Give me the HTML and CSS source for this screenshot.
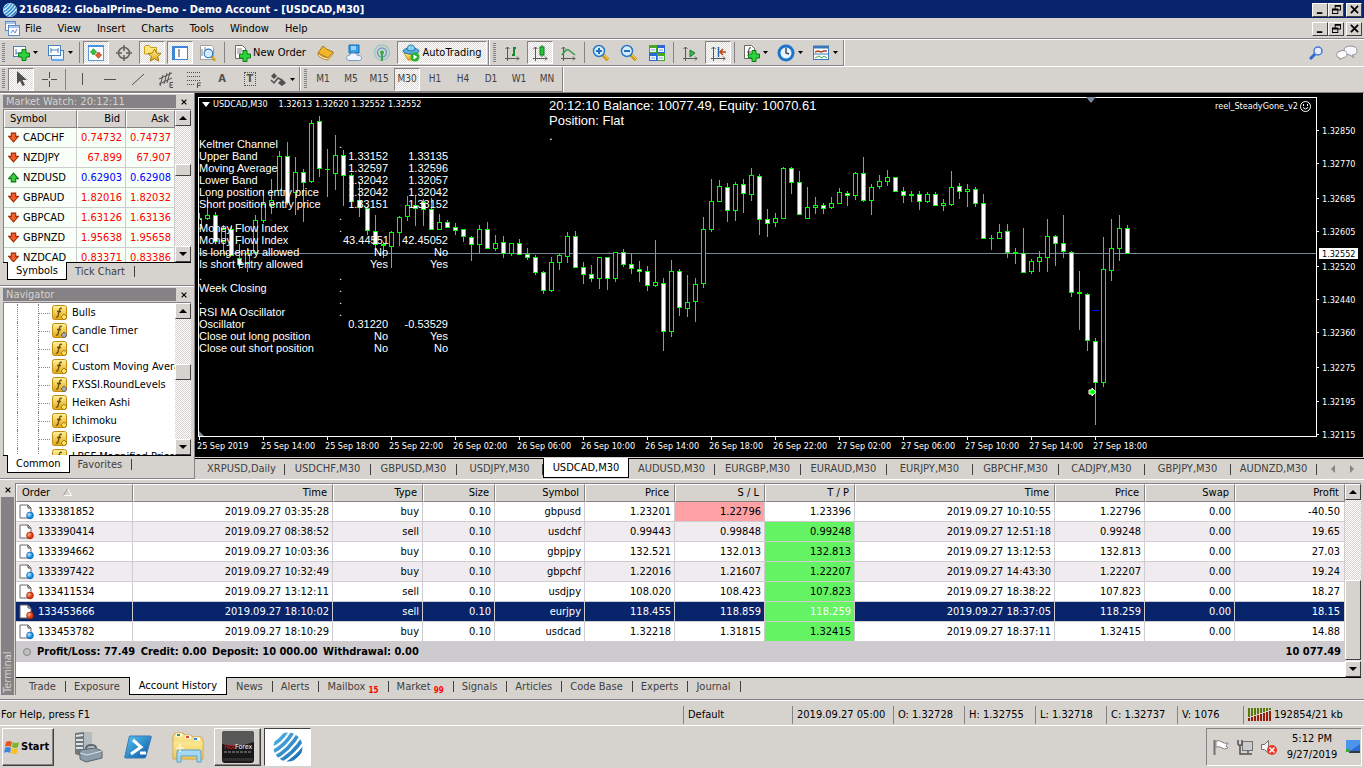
FILE: index.html
```
<!DOCTYPE html>
<html lang="en">

<head>
  <meta charset="UTF-8">
  <meta name="viewport" content="width=device-width, initial-scale=1.0">
  <title>2160842: GlobalPrime-Demo - Demo Account - [USDCAD,M30]</title>

  <link rel="stylesheet" href="styles.css">
</head>

<body>
  <!-- shared icon shapes -->
  <svg class="defs" width="0" height="0" aria-hidden="true">
    <defs>
      <linearGradient id="gold" x1="0" y1="0" x2="0" y2="1"><stop offset="0" stop-color="#fff3a0"/><stop offset="1" stop-color="#e0a410"/></linearGradient>
      <linearGradient id="globeBlue" x1="0" y1="0" x2="1" y2="1"><stop offset="0" stop-color="#5cc4f4"/><stop offset="1" stop-color="#0654a0"/></linearGradient>
      <radialGradient id="ballBlue" cx="35%" cy="35%"><stop offset="0" stop-color="#c8ecff"/><stop offset="1" stop-color="#0a86de"/></radialGradient>
      <radialGradient id="ballRed" cx="35%" cy="35%"><stop offset="0" stop-color="#ffb090"/><stop offset="1" stop-color="#d83408"/></radialGradient>
      <clipPath id="globeClip"><circle cx="15" cy="15" r="14.5"/></clipPath>
      <symbol id="globe" viewBox="0 0 30 30">
        <g clip-path="url(#globeClip)" fill="none" stroke="url(#globeBlue)" stroke-width="3.6">
          <path d="M-4 14Q8 10 15-3M-3 21Q12 15 21-2M-1 27Q15 20 27 0M3 31Q20 23 31 5M9 34Q23 27 34 12M16 36Q27 30 36 19"/>
        </g>
      </symbol>
      <symbol id="min" viewBox="0 0 10 10"><path d="M1 8h6v2H1z"/></symbol>
      <symbol id="restore" viewBox="0 0 10 10"><path d="M3 0h7v6H7v4H0V4h3zM4 2v2h3v1h2V2zM1 6v3h5V6z" fill-rule="evenodd"/></symbol>
      <symbol id="close" viewBox="0 0 10 10"><path d="M1 1l8 8M9 1L1 9" stroke="#000" stroke-width="2"/></symbol>
      <symbol id="up" viewBox="0 0 8 8"><path d="M4 2L8 6H0z"/></symbol>
      <symbol id="down" viewBox="0 0 8 8"><path d="M4 6L0 2h8z"/></symbol>
      <symbol id="drop" viewBox="0 0 5 3"><path d="M0 0h5L2.500 3z"/></symbol>
      <symbol id="arrDown" viewBox="0 0 10 10"><path d="M3 1h4v3h2.500L5 9 .5 4H3z" fill="#f26030" stroke="#a02c08"/></symbol>
      <symbol id="arrUp" viewBox="0 0 10 10"><path d="M3 9h4V6h2.500L5 1 .5 6H3z" fill="#40c840" stroke="#107818"/></symbol>
      <symbol id="plus" viewBox="0 0 12 12"><path d="M4 .5h4V4h3.500v4H8v3.500H4V8H.5V4H4z" fill="#2cd43c" stroke="#0a7c14"/></symbol>
      <symbol id="lens" viewBox="0 0 18 18"><path d="M11 11l5 5" stroke="#c89814" stroke-width="3.500"/><path d="M12 11l4.500 4.500" stroke="#ffe060"/><circle cx="7" cy="7" r="5.500" fill="#d4ecfc" stroke="#2c78c4" stroke-width="1.500"/></symbol>
      <symbol id="axes" viewBox="0 0 18 18"><path d="M4.500 3v14M2 14.500h14M2.500 5l2-2 2 2M14 12.500l2 2-2 2" fill="none" stroke="#585858"/></symbol>
      <symbol id="fx" viewBox="0 0 16 16">
        <rect x=".5" y=".5" width="14" height="14" rx="2" fill="url(#gold)" stroke="#c08c10"/>
        <path d="M10 3.500q-2-1-2.500 1.500L6 11q-.5 1.500-2 1M5 6.500h4" fill="none" stroke="#6c4c00" stroke-width="1.300"/>
      </symbol>
      <symbol id="docBuy" viewBox="0 0 16 16"><path d="M1 1h8l3 3v10H1z" fill="#fff" stroke="#686868"/><path d="M9 1v3h3" fill="none" stroke="#404040"/><circle cx="11" cy="11.500" r="3.400" fill="url(#ballBlue)" stroke="#0868b0" stroke-width=".7"/></symbol>
      <symbol id="docSell" viewBox="0 0 16 16"><path d="M1 1h8l3 3v10H1z" fill="#fff" stroke="#686868"/><path d="M9 1v3h3" fill="none" stroke="#404040"/><circle cx="11" cy="11.500" r="3.400" fill="url(#ballRed)" stroke="#a82404" stroke-width=".7"/></symbol>
    </defs>
  </svg>

  <header class="titlebar">
    <svg class="ico14"><circle cx="7" cy="7" r="7" fill="#d8f0ff"/><use href="#globe" width="14" height="14"/></svg>
    <h1>2160842: GlobalPrime-Demo - Demo Account - [USDCAD,M30]</h1>
    <div class="winbtns">
      <button aria-label="Minimize"><svg><use href="#min"/></svg></button>
      <button aria-label="Restore"><svg><use href="#restore"/></svg></button>
      <button class="x" aria-label="Close"><svg><use href="#close"/></svg></button>
    </div>
  </header>

  <nav class="menubar">
    <svg width="16" height="16" fill="#fff" stroke="#5c8cd0"><rect x="1.500" y=".5" width="10" height="9"/><path d="M2 2h9"/><rect x="4.500" y="4.500" width="11" height="10"/><path d="M5 6h10M7 12l2-3 2 3 2-4" fill="none"/></svg>
    <button>File</button>
    <button>View</button>
    <button>Insert</button>
    <button>Charts</button>
    <button>Tools</button>
    <button>Window</button>
    <button>Help</button>
    <div class="winbtns">
      <button aria-label="Minimize chart"><svg><use href="#min"/></svg></button>
      <button aria-label="Restore chart"><svg><use href="#restore"/></svg></button>
      <button class="x" aria-label="Close chart"><svg><use href="#close"/></svg></button>
    </div>
  </nav>

  <div class="toolrow">
    <div class="toolbar">
      <i class="grip"></i>
      <button class="tb wide" aria-label="New chart">
        <svg class="ico18"><rect x="1.500" y="2.500" width="12" height="10" fill="#fff" stroke="#4880b8"/><path d="M4 5v6M4 9h8" stroke="#4880b8"/><use href="#plus" x="6" y="5" width="12" height="12"/></svg>
        <svg class="drop"><use href="#drop"/></svg>
      </button>
      <button class="tb wide" aria-label="Profiles">
        <svg class="ico18"><rect x="4.500" y="6.500" width="12" height="9" fill="#e8f4ff" stroke="#4880c0"/><rect x="1.500" y="1.500" width="12" height="10" fill="#fff" stroke="#4880c0"/><path d="M4 4v5M11 4v5M4 6h7" stroke="#4880c0"/><path d="M5 16h12" stroke="#68a8e8" stroke-width="2"/></svg>
        <svg class="drop"><use href="#drop"/></svg>
      </button>
      <i class="sep"></i>
      <button class="tb on" aria-label="Market Watch"><svg class="ico18"><rect x="1.500" y="1.500" width="15" height="15" fill="#fff" stroke="#5c9cdc"/><path d="M1 2h16" stroke="#4890e0" stroke-width="2"/><use href="#arrUp" x="3" y="4" width="7" height="7"/><use href="#arrDown" x="8" y="8" width="7" height="7"/></svg></button>
      <button class="tb" aria-label="Data Window"><svg class="ico18"><circle cx="9" cy="9" r="5.500" fill="none" stroke="#606060" stroke-width="1.500"/><path d="M9 1v6M9 11v6M1 9h6M11 9h6" stroke="#606060" stroke-width="1.500"/></svg></button>
      <button class="tb on" aria-label="Navigator"><svg class="ico18"><path d="M1.500 10V2.500l1-1h4l1 2h6V10z" fill="#ffe878" stroke="#c8a020"/><path d="M11.500 5l2 4 4.500.5-3.300 3 1 4.500-4.200-2.300L7.300 17l1-4.500L5 9.500 9.500 9z" fill="url(#gold)" stroke="#a87800"/></svg></button>
      <button class="tb on" aria-label="Terminal"><svg class="ico18"><rect x="1.500" y="2.500" width="15" height="13" fill="#fff" stroke="#3c84d4"/><path d="M3 3v12M1 3h16" stroke="#3c84d4" stroke-width="2"/><path d="M7 6h2M7 8h2M7 10h2M7 12h2" stroke="#404040"/></svg></button>
      <button class="tb" aria-label="Strategy Tester"><svg class="ico18"><path d="M1.500 1.500h11l2 2v12h-13z" fill="#fff" stroke="#a0a0a0"/><path d="M3 5v7M6 3v7" stroke="#808080"/><use href="#lens" x="4" y="4" width="14" height="14"/></svg></button>
      <i class="sep"></i>
      <button class="tb labeled order"><svg class="ico18"><path d="M2.500 1.500h7l3 3v10h-10z" fill="#fff" stroke="#686868"/><path d="M4 5h5M4 7h6M4 9h4" stroke="#808080"/><use href="#plus" x="6" y="6" width="12" height="12"/></svg><span>New Order</span></button>
      <button class="tb" aria-label="MetaEditor"><svg class="ico18"><path d="M1 9l5-7q2 3 10 6l-5 6z" fill="#f0b828" stroke="#a87410"/><path d="M1 9q3 4 10 5l5-6v2l-5 6Q3 15 1 11z" fill="#fff0b0" stroke="#a87410" stroke-width=".8"/></svg></button>
      <button class="tb" aria-label="MQL5 community"><svg class="ico18"><path d="M4 1h10v8H4z" fill="#38a0e8" stroke="#1468b0"/><path d="M6 3h5M6 5h5" stroke="#fff"/><path d="M4 16.500q-3-.5-2.500-3T5 11q1-2.500 4-2t3.500 2.500q3-.5 4 1.500t-2 3.500z" fill="#f0f6ff" stroke="#7c9cc8"/></svg></button>
      <button class="tb" aria-label="Signals"><svg class="ico18" fill="none" stroke-width="1.500"><circle cx="9" cy="8.500" r="7.500" stroke="#a0c8c0"/><circle cx="9" cy="8.500" r="4.500" stroke="#68a0c8"/><circle cx="9" cy="8.500" r="2" fill="#38a848"/><path d="M9 9v8" stroke="#38a848" stroke-width="2"/></svg></button>
      <button class="tb on labeled auto"><svg class="ico18"><path d="M2 9q7 3 14 0l-2 7H6z" fill="url(#gold)" stroke="#c89818"/><ellipse cx="9" cy="7" rx="8" ry="3" fill="#58b0e0" stroke="#2878b0"/><path d="M5 6q0-5 4-5t4 5q-4 2-8 0z" fill="#88d0f4" stroke="#2878b0"/><circle cx="13" cy="13" r="4.500" fill="#28b038"/><path d="M11.500 10.500l4 2.500-4 2.500z" fill="#fff"/></svg><span>AutoTrading</span></button>
    </div>
    <div class="toolbar">
      <i class="grip"></i>
      <button class="tb" aria-label="Bar Chart"><svg class="ico18"><use href="#axes" width="18" height="18"/><path d="M11 3v9M9 11h2M11 4h2" stroke="#188828" stroke-width="2"/></svg></button>
      <button class="tb on" aria-label="Candlesticks"><svg class="ico18"><use href="#axes" width="18" height="18"/><path d="M11 1v12" stroke="#187820"/><rect x="9" y="3" width="4" height="8" fill="#20c838" stroke="#107818"/></svg></button>
      <button class="tb" aria-label="Line Chart"><svg class="ico18"><use href="#axes" width="18" height="18"/><path d="M3 11q5-8 8-4l5 4" fill="none" stroke="#389848" stroke-width="1.500"/></svg></button>
      <i class="sep"></i>
      <button class="tb" aria-label="Zoom In"><svg class="ico18"><use href="#lens" width="18" height="18"/><path d="M4 7h6M7 4v6" stroke="#2070c0" stroke-width="2"/></svg></button>
      <button class="tb" aria-label="Zoom Out"><svg class="ico18"><use href="#lens" width="18" height="18"/><path d="M4 7h6" stroke="#2070c0" stroke-width="2"/></svg></button>
      <button class="tb" aria-label="Tile Windows"><svg class="ico18"><path d="M1 1h8v8H1z" fill="#48a828"/><path d="M9 1h8v8H9z" fill="#2868d8"/><path d="M1 9h8v8H1z" fill="#2868d8"/><path d="M9 9h8v8H9z" fill="#48a828"/><path d="M2 4h6v4H2zM10 4h6v4h-6zM2 12h6v4H2zM10 12h6v4h-6z" fill="#eef4ff"/><path d="M3 6h4M11 6h4M3 14h4M11 14h4" stroke="#80a8d0"/></svg></button>
      <i class="sep"></i>
      <button class="tb" aria-label="Auto Scroll"><svg class="ico18"><use href="#axes" width="18" height="18"/><path d="M9 6l5 3-5 4z" fill="#38b848" stroke="#188028"/></svg></button>
      <button class="tb on" aria-label="Chart Shift"><svg class="ico18"><use href="#axes" width="18" height="18"/><path d="M9.500 3v10" stroke="#2868b0" stroke-width="1.500"/><path d="M17 8h-6M14 5l-3 3 3 3" fill="none" stroke="#c04010" stroke-width="1.500"/></svg></button>
      <i class="sep"></i>
      <button class="tb wide" aria-label="Indicators"><svg class="ico18"><path d="M2.500 1.500h7l3 3v10h-10z" fill="#fff" stroke="#686868"/><path d="M9 4q-2-1-2 1l-1 7M5 8h4" fill="none" stroke="#404040"/><use href="#plus" x="6" y="6" width="12" height="12"/></svg><svg class="drop"><use href="#drop"/></svg></button>
      <button class="tb wide" aria-label="Periods"><svg class="ico18"><circle cx="9" cy="9" r="7" fill="#e8f6ff" stroke="#1c74cc" stroke-width="3"/><path d="M9 4v5l3 1" fill="none" stroke="#404858" stroke-width="1.500"/></svg><svg class="drop"><use href="#drop"/></svg></button>
      <button class="tb wide" aria-label="Templates"><svg class="ico18"><rect x="1.500" y="2.500" width="15" height="13" fill="#fff" stroke="#3878b8"/><path d="M1 3h16" stroke="#3878b8" stroke-width="3"/><path d="M3 8l3-1 3 1 3-1h3" fill="none" stroke="#b04020" stroke-width="1.500"/><path d="M2 10h14" stroke="#3878b8"/><path d="M3 14l4-2 3 2 2-2 3 2" fill="none" stroke="#38a040"/></svg><svg class="drop"><use href="#drop"/></svg></button>
    </div>
    <div class="tray-tools">
      <svg width="14" height="14"><path d="M1 13l5-5" stroke="#3068c8" stroke-width="3"/><circle cx="9" cy="5" r="4" fill="#e8eef8" stroke="#4878d8" stroke-width="1.500"/></svg>
      <svg width="22" height="16"><path d="M14 1q7 0 7 4.500T16 10l2 3-4-3q-6-.5-6-4.500T14 1z" fill="#f8f8fc" stroke="#909098"/><path d="M6 5.500q5 0 5 3.500t-5 4l-2 2v-2q-3.500-.5-3.500-3.500T6 5.500z" fill="#fff" stroke="#909098"/></svg>
    </div>
  </div>

  <div class="toolrow second">
    <div class="toolbar">
      <i class="grip"></i>
      <button class="tb on" aria-label="Cursor"><svg class="ico18"><path d="M5 1v13l3-3 2.500 5 2.500-1-2.500-5H15z" fill="#505050"/></svg></button>
      <button class="tb" aria-label="Crosshair"><svg class="ico18 line"><path d="M9.500 2v6M9.500 11v6M2 9.500h6M11 9.500h6"/></svg></button>
      <i class="sep"></i>
      <button class="tb" aria-label="Vertical Line"><svg class="ico18 line"><path d="M9.500 3v12"/></svg></button>
      <button class="tb" aria-label="Horizontal Line"><svg class="ico18 line"><path d="M3 9.500h12"/></svg></button>
      <button class="tb" aria-label="Trendline"><svg class="ico18 line"><path d="M3 15L15 4"/></svg></button>
      <button class="tb" aria-label="Equidistant Channel"><svg class="ico18 line"><path d="M2 9L15 3M2 14l13-6M6 5L3 16M10 3L7 14M13 2l-3 11"/><path d="M16 12.500h-3v5h3M13 15h2.500"/></svg></button>
      <button class="tb" aria-label="Fibonacci"><svg class="ico18 line"><path d="M2 2.500h14M2 6.500h14M2 10.500h14M2 14.500h8" stroke-dasharray="1 1"/><path d="M16 13h-3.500v5M13 15.500h2.500"/></svg></button>
      <button class="tb glyph" aria-label="Text">A</button>
      <button class="tb glyph boxed" aria-label="Text Label"><span>T</span></button>
      <button class="tb wide" aria-label="Arrows"><svg class="ico18"><path d="M5 3l3 3-3 3-3-3zM13 9l4 4-4 3-4-3z" fill="#505050"/><path d="M2 10l3 3 4-5 4 2" fill="none" stroke="#505050" stroke-width="1.500"/></svg><svg class="drop"><use href="#drop"/></svg></button>
    </div>
    <div class="toolbar frames">
      <i class="grip"></i>
      <button class="tb">M1</button>
      <button class="tb">M5</button>
      <button class="tb">M15</button>
      <button class="tb on">M30</button>
      <button class="tb">H1</button>
      <button class="tb">H4</button>
      <button class="tb">D1</button>
      <button class="tb">W1</button>
      <button class="tb">MN</button>
    </div>
  </div>

  <main class="workspace">
    <aside class="side">
      <section class="panel">
        <div class="panel-title"><h2>Market Watch: 20:12:11</h2><button aria-label="Close Market Watch"><svg><use href="#close"/></svg></button></div>
        <div class="panel-box">
          <div class="clip">
            <table class="quotes">
              <thead><tr><th>Symbol</th><th>Bid</th><th>Ask</th></tr></thead>
              <tbody>
                <tr><td><svg><use href="#arrDown"/></svg>CADCHF</td><td>0.74732</td><td>0.74737</td></tr>
                <tr><td><svg><use href="#arrDown"/></svg>NZDJPY</td><td>67.899</td><td>67.907</td></tr>
                <tr class="rise"><td><svg><use href="#arrUp"/></svg>NZDUSD</td><td>0.62903</td><td>0.62908</td></tr>
                <tr><td><svg><use href="#arrDown"/></svg>GBPAUD</td><td>1.82016</td><td>1.82032</td></tr>
                <tr><td><svg><use href="#arrDown"/></svg>GBPCAD</td><td>1.63126</td><td>1.63136</td></tr>
                <tr><td><svg><use href="#arrDown"/></svg>GBPNZD</td><td>1.95638</td><td>1.95658</td></tr>
                <tr><td><svg><use href="#arrDown"/></svg>NZDCAD</td><td>0.83371</td><td>0.83386</td></tr>
              </tbody>
            </table>
          </div>
          <div class="scroll watch-scroll">
            <button aria-label="Scroll up"><svg><use href="#up"/></svg></button>
            <i class="thumb"></i>
            <button aria-label="Scroll down"><svg><use href="#down"/></svg></button>
          </div>
        </div>
        <div class="tabs"><button class="active">Symbols</button><button>Tick Chart</button></div>
      </section>

      <section class="panel">
        <div class="panel-title"><h2>Navigator</h2><button aria-label="Close Navigator"><svg><use href="#close"/></svg></button></div>
        <div class="panel-box">
          <div class="clip">
            <ul class="tree">
              <li><svg><use href="#fx"/><path class="mark" d="M12 9l3 3-3 3-3-3z"/></svg>Bulls</li>
              <li><svg><use href="#fx"/><path class="mark gray" d="M12 9l3 3-3 3-3-3z"/></svg>Candle Timer</li>
              <li><svg><use href="#fx"/><path class="mark" d="M12 9l3 3-3 3-3-3z"/></svg>CCI</li>
              <li><svg><use href="#fx"/><path class="mark" d="M12 9l3 3-3 3-3-3z"/></svg>Custom Moving Average</li>
              <li><svg><use href="#fx"/><path class="mark gray" d="M12 9l3 3-3 3-3-3z"/></svg>FXSSI.RoundLevels</li>
              <li><svg><use href="#fx"/><path class="mark" d="M12 9l3 3-3 3-3-3z"/></svg>Heiken Ashi</li>
              <li><svg><use href="#fx"/><path class="mark" d="M12 9l3 3-3 3-3-3z"/></svg>Ichimoku</li>
              <li><svg><use href="#fx"/><path class="mark" d="M12 9l3 3-3 3-3-3z"/></svg>iExposure</li>
              <li><svg><use href="#fx"/></svg>LBSF Magnified Price</li>
            </ul>
          </div>
          <div class="scroll nav-scroll">
            <button aria-label="Scroll up"><svg><use href="#up"/></svg></button>
            <i class="thumb"></i>
            <button aria-label="Scroll down"><svg><use href="#down"/></svg></button>
          </div>
        </div>
        <div class="tabs"><button class="active">Common</button><button>Favorites</button></div>
      </section>
    </aside>

    <section class="chart-area">
      <div class="chart">
        <svg id="chart"></svg>
        <p class="quote-line"><svg width="8" height="5" fill="#fff"><path d="M0 0h8L4 5z"/></svg><span class="pair">USDCAD,M30</span><span>1.32613</span><span>1.32620</span><span>1.32552</span><span>1.32552</span></p>
        <p class="balance">20:12:10 Balance: 10077.49, Equity: 10070.61<br>Position: Flat<br>.</p>
        <p class="expert">reel_SteadyGone_v2
          <svg width="11" height="11" fill="none" stroke="#fff"><circle cx="5.500" cy="5.500" r="5"/><path d="M3 6.500q2.500 3 5 0M3.500 3v2M7.500 3v2"/></svg>
        </p>
        <div class="readout">
          <span>Keltner Channel</span><span>.</span><span></span><span></span>
          <span>Upper Band</span><span></span><span>1.33152</span><span>1.33135</span>
          <span>Moving Average</span><span></span><span>1.32597</span><span>1.32596</span>
          <span>Lower Band</span><span></span><span>1.32042</span><span>1.32057</span>
          <span>Long position entry price</span><span></span><span>1.32042</span><span>1.32042</span>
          <span>Short position entry price</span><span></span><span>1.33151</span><span>1.33152</span>
          <span>.</span><span>.</span><span></span><span></span>
          <span>Money Flow Index</span><span>.</span><span></span><span></span>
          <span>Money Flow Index</span><span></span><span>43.44551</span><span>42.45052</span>
          <span>Is long entry allowed</span><span></span><span>No</span><span>No</span>
          <span>Is short entry allowed</span><span></span><span>Yes</span><span>Yes</span>
          <span>.</span><span>.</span><span></span><span></span>
          <span>Week Closing</span><span>.</span><span></span><span></span>
          <span>.</span><span>.</span><span></span><span></span>
          <span>RSI MA Oscillator</span><span>.</span><span></span><span></span>
          <span>Oscillator</span><span></span><span>0.31220</span><span>-0.53529</span>
          <span>Close out long position</span><span></span><span>No</span><span>Yes</span>
          <span>Close out short position</span><span></span><span>No</span><span>No</span>
        </div>
      </div>
      <div class="tabs chart-tabs">
        <button>XRPUSD,Daily</button>
        <button>USDCHF,M30</button>
        <button>GBPUSD,M30</button>
        <button>USDJPY,M30</button>
        <button class="active">USDCAD,M30</button>
        <button>AUDUSD,M30</button>
        <button>EURGBP,M30</button>
        <button>EURAUD,M30</button>
        <button>EURJPY,M30</button>
        <button>GBPCHF,M30</button>
        <button>CADJPY,M30</button>
        <button>GBPJPY,M30</button>
        <button>AUDNZD,M30</button>
        <span class="tab-scroll"><svg width="4" height="8"><path d="M4 0v8L0 4z"/></svg><svg width="4" height="8"><path d="M0 0v8l4-4z"/></svg></span>
      </div>
    </section>
  </main>

  <section class="terminal">
    <div class="strip">
      <button aria-label="Close Terminal"><svg><use href="#close"/></svg></button>
      <h2>Terminal</h2>
    </div>
    <div class="terminal-main">
      <div class="history">
        <div class="clip">
          <table class="orders">
            <colgroup>
              <col class="c-order"><col class="c-time"><col class="c-mid"><col class="c-size"><col class="c-mid"><col class="c-mid"><col class="c-mid"><col class="c-mid"><col class="c-time"><col class="c-mid"><col class="c-mid"><col>
            </colgroup>
            <thead>
              <tr><th>Order <svg width="9" height="8"><path d="M4.500.5l4 7h-8z" fill="none" stroke="#fff"/><path d="M4.500.5l-4 7" stroke="#909090"/></svg></th><th>Time</th><th>Type</th><th>Size</th><th>Symbol</th><th>Price</th><th>S / L</th><th>T / P</th><th>Time</th><th>Price</th><th>Swap</th><th>Profit</th></tr>
            </thead>
            <tbody>
              <tr><td><svg><use href="#docBuy"/></svg>133381852</td><td>2019.09.27 03:35:28</td><td>buy</td><td>0.10</td><td>gbpusd</td><td>1.23201</td><td class="stop">1.22796</td><td>1.23396</td><td>2019.09.27 10:10:55</td><td>1.22796</td><td>0.00</td><td>-40.50</td></tr>
              <tr><td><svg><use href="#docSell"/></svg>133390414</td><td>2019.09.27 08:38:52</td><td>sell</td><td>0.10</td><td>usdchf</td><td>0.99443</td><td>0.99848</td><td class="take">0.99248</td><td>2019.09.27 12:51:18</td><td>0.99248</td><td>0.00</td><td>19.65</td></tr>
              <tr><td><svg><use href="#docBuy"/></svg>133394662</td><td>2019.09.27 10:03:36</td><td>buy</td><td>0.10</td><td>gbpjpy</td><td>132.521</td><td>132.013</td><td class="take">132.813</td><td>2019.09.27 13:12:53</td><td>132.813</td><td>0.00</td><td>27.03</td></tr>
              <tr><td><svg><use href="#docBuy"/></svg>133397422</td><td>2019.09.27 10:32:49</td><td>buy</td><td>0.10</td><td>gbpchf</td><td>1.22016</td><td>1.21607</td><td class="take">1.22207</td><td>2019.09.27 14:43:30</td><td>1.22207</td><td>0.00</td><td>19.24</td></tr>
              <tr><td><svg><use href="#docSell"/></svg>133411534</td><td>2019.09.27 13:12:11</td><td>sell</td><td>0.10</td><td>usdjpy</td><td>108.020</td><td>108.423</td><td class="take">107.823</td><td>2019.09.27 18:38:22</td><td>107.823</td><td>0.00</td><td>18.27</td></tr>
              <tr class="selected"><td><svg><use href="#docSell"/></svg>133453666</td><td>2019.09.27 18:10:02</td><td>sell</td><td>0.10</td><td>eurjpy</td><td>118.455</td><td>118.859</td><td class="take">118.259</td><td>2019.09.27 18:37:05</td><td>118.259</td><td>0.00</td><td>18.15</td></tr>
              <tr><td><svg><use href="#docBuy"/></svg>133453782</td><td>2019.09.27 18:10:29</td><td>buy</td><td>0.10</td><td>usdcad</td><td>1.32218</td><td>1.31815</td><td class="take">1.32415</td><td>2019.09.27 18:37:11</td><td>1.32415</td><td>0.00</td><td>14.88</td></tr>
            </tbody>
            <tfoot>
              <tr><td colspan="11"><i class="bullet"></i><span>Profit/Loss: 77.49</span> <span>Credit: 0.00</span> <span>Deposit: 10 000.00</span> <span>Withdrawal: 0.00</span></td><td>10 077.49</td></tr>
            </tfoot>
          </table>
        </div>
        <div class="scroll history-scroll">
          <button aria-label="Scroll up"><svg><use href="#up"/></svg></button>
          <i class="thumb"></i>
          <button aria-label="Scroll down"><svg><use href="#down"/></svg></button>
        </div>
      </div>
      <div class="tabs terminal-tabs">
        <button>Trade</button>
        <button>Exposure</button>
        <button class="active">Account History</button>
        <button>News</button>
        <button>Alerts</button>
        <button>Mailbox <sub>15</sub></button>
        <button>Market <sub>99</sub></button>
        <button>Signals</button>
        <button>Articles</button>
        <button>Code Base</button>
        <button>Experts</button>
        <button>Journal</button>
      </div>
    </div>
  </section>

  <div class="status">
    <span class="help">For Help, press F1</span>
    <span class="s-profile">Default</span>
    <span class="s-time">2019.09.27 05:00</span>
    <span class="s-val">O: 1.32728</span>
    <span class="s-val">H: 1.32755</span>
    <span class="s-val">L: 1.32718</span>
    <span class="s-val">C: 1.32737</span>
    <span class="s-vol">V: 1076</span>
    <span class="s-net">
      <svg width="24" height="13" stroke-width="2"><path d="M1 0v9M4 0v8M7 0v7M10 0v6M13 0v5M16 0v4M19 0v3M22 0v2" stroke="#587808"/><path d="M1 10v3M4 9v4M7 8v5M10 7v6M13 6v7M16 5v8M19 4v9M22 3v10" stroke="#981c08"/></svg>
      192854/21 kb
    </span>
  </div>

  <footer class="taskbar">
    <button class="start"><svg width="16" height="16"><path d="M2 3q3-2 6 0L7 8Q4 6 1 8z" fill="#e85820"/><path d="M9 3q3 2 6 0l-1 5q-3 2-6 0z" fill="#78b828"/><path d="M1 9q3-2 6 0l-1 5Q3 12 0 14z" fill="#3c84e0"/><path d="M8 9q3 2 6 0l-1 5q-3 2-6 0z" fill="#f8c020"/></svg>Start</button>
    <button class="task" aria-label="Server Manager"><svg width="30" height="32"><path d="M2 2l9-1v25l-9-3z" fill="#70787c"/><path d="M11 1h8v25h-8z" fill="#b4bcc0"/><path d="M3 5l7-1M3 9h7M3 13h7M3 17h7" stroke="#dce4e8" stroke-width="2"/><path d="M7 19l15-2 7 3v7l-16 4-6-3z" fill="#8c9ca8" stroke="#58646c"/><path d="M7 22l7 2 15-4" fill="none" stroke="#d8e4ec"/><path d="M13 18q0-4 5-4t5 3" fill="none" stroke="#606870" stroke-width="2"/></svg></button>
    <button class="task" aria-label="PowerShell"><svg width="30" height="32"><path d="M7 5h20q2 0 1 2l-5 18q0 2-2 2H3q-2 0-1-2L6 7q0-2 1-2z" fill="url(#globeBlue)" stroke="#3878b8"/><path d="M10 9l8 7-10 7M17 22h6" fill="none" stroke="#fff" stroke-width="3"/></svg></button>
    <button class="task" aria-label="Explorer"><svg width="34" height="32"><path d="M2 5l2-3h8l2 2h6l2 2h8l2 3v19H2z" fill="#f8e088" stroke="#d0a848"/><path d="M5 4h6M14 6h6M23 8h6" stroke="#fff" stroke-width="3"/><path d="M6 4h3" stroke="#28a838" stroke-width="2"/><path d="M15 6h3" stroke="#d84830" stroke-width="2"/><path d="M23 8h3" stroke="#3088e0" stroke-width="2"/><path d="M2 11h30v17H2z" fill="url(#gold)" opacity=".4"/><path d="M6 31V21q0-2 2-2h20q2 0 2 2v10h-4v-6H10v6z" fill="#a4d8f4" stroke="#58a0cc"/><path d="M9 13v8M5 17h8" stroke="#fff"/></svg></button>
    <button class="task framed" aria-label="HotForex"><svg width="32" height="32"><rect width="32" height="32" rx="3" fill="#181818"/><path d="M0 3q0-3 3-3h26q3 0 3 3v8q-16 6-32 2z" fill="#585858"/><path d="M1 27h30v3H1z" fill="#303030"/><text class="logo-text" x="2" y="18" fill="#e02020">Hot<tspan fill="#fff">Forex</tspan></text><path d="M2 21h28" stroke="#989898" stroke-dasharray="3 1"/></svg></button>
    <button class="task framed current" aria-label="MetaTrader"><svg width="30" height="30"><use href="#globe"/></svg></button>
    <div class="tray">
      <svg width="18" height="18"><path d="M2.500 2v15" stroke="#707070" stroke-width="2"/><path d="M4 3q4-1 6 1t6 1l-2 3 2 2q-4 2-6 0T4 9z" fill="#fff" stroke="#808080"/></svg>
      <svg width="18" height="18"><rect x="6.500" y="3.500" width="10" height="9" fill="#c8ccd0" stroke="#707070"/><path d="M8 16h8M12 13v3" stroke="#707070" stroke-width="2"/><path d="M2 2v4q2 3 4 0V2M4 7v9h4" fill="none" stroke="#505050" stroke-width="1.500"/></svg>
      <svg width="18" height="18"><path d="M1.500 6.500h3l4-4v13l-4-4h-3z" fill="#f4f4f4" stroke="#707070"/><circle cx="12" cy="12" r="5" fill="#e83828"/><path d="M9.500 9.500l5 5M14.500 9.500l-5 5" stroke="#fff" stroke-width="1.500"/></svg>
      <p>5:12 PM<br>9/27/2019</p>
      <svg width="14" height="14"><rect width="14" height="11" fill="#2c6cd0"/><path d="M0 0h14v4L4 11H0z" fill="#4c94ec"/><path d="M3 11h11v2H3z" fill="#303844"/><path d="M0 9h4v3H0z" fill="#38a838"/></svg>
    </div>
  </footer>

  <script src="chart.js"></script>
</body>

</html>
```
FILE: styles.css
```
* {
  box-sizing: border-box;
}

html,
body {
  margin: 0;
  padding: 0;
  height: 100%;
}

body {
  display: flex;
  flex-direction: column;
  overflow: hidden;

  font-family: "DejaVu Sans Condensed", "DejaVu Sans", sans-serif;
  font-size: 11px;
  line-height: 14px;
  color: #000;
  background-color: #d6d3ce;
}

button {
  margin: 0;
  padding: 0;
  border: none;
  background: none;
  font: inherit;
  color: inherit;
  white-space: nowrap;
}

h1,
h2,
p,
ul {
  margin: 0;
  padding: 0;
  font-size: 11px;
  font-weight: normal;
}

svg {
  flex: none;
}

.defs {
  position: absolute;
}

.ico14 {
  width: 14px;
  height: 14px;
}

.ico18 {
  width: 18px;
  height: 18px;
}

/* title + menu */
.titlebar {
  flex: none;
  display: flex;
  align-items: center;
  height: 18px;
  padding: 1px 2px 0 3px;
  gap: 2px;

  background-color: #08246b;
  color: #fff;
}

.titlebar h1 {
  font-weight: bold;
}

.menubar {
  flex: none;
  display: flex;
  align-items: center;
  height: 21px;
  padding: 1px 2px 0 4px;

  border-bottom: 1px solid #848284;
}

.menubar > button {
  padding: 0 8px;
}

.menubar > svg {
  margin-right: -3px;
}

.winbtns {
  display: flex;
  margin-left: auto;
}

.winbtns button {
  display: flex;
  align-items: center;
  justify-content: center;
  width: 16px;
  height: 14px;

  background-color: #d6d3ce;
  border: 1px solid;
  border-color: #fff #404040 #404040 #fff;
}

.winbtns .x {
  margin-left: 2px;
}

.winbtns svg {
  width: 9px;
  height: 9px;
}

/* toolbars */
.toolrow {
  flex: none;
  display: flex;
  height: 27px;
  border-top: 1px solid #fff;
}

.toolrow.second {
  border-bottom: 1px solid #848284;
}

.toolbar {
  display: flex;
  align-items: center;
  gap: 2px;
  padding: 0 1px 0 2px;

  border-right: 1px solid #848284;
  border-bottom: 1px solid #848284;
  box-shadow: 1px 0 0 #fff;
}

.toolbar + .toolbar {
  padding: 0 2px 0 4px;
}

.grip {
  width: 3px;
  height: 20px;
  margin-right: 1px;
  background: repeating-linear-gradient(#848284 0 1px, #d6d3ce 1px 2px);
}

.sep {
  width: 1px;
  height: 21px;
  margin: 0 1px;
  background-color: #848284;
}

.tb {
  display: flex;
  align-items: center;
  justify-content: center;
  width: 26px;
  height: 23px;
}

.tb.wide {
  width: 33px;
  gap: 3px;
}

.tb.on {
  border: 1px solid;
  border-color: #848284 #fff #fff #848284;
  background: repeating-conic-gradient(#fff 0 25%, #dedbd6 0 50%) 0 0 / 2px 2px;
}

.tb.labeled {
  width: auto;
  gap: 2px;
}

.tb.order {
  width: 83px;
}

.tb.auto {
  width: 90px;
}

.drop {
  width: 5px;
  height: 3px;
}

.line {
  fill: none;
  stroke: #505050;
}

.glyph {
  font-weight: bold;
  color: #505050;
}

.boxed span {
  padding: 0 2px;
  line-height: 12px;
  border: 1px dotted #505050;
}

.frames .tb {
  color: #404040;
  font-size: 10px;
}

.tray-tools {
  display: flex;
  align-items: center;
  gap: 13px;
  margin-left: auto;
  padding-right: 6px;
}

/* workspace */
.workspace {
  flex: 1;
  display: flex;
  min-height: 0;
}

.side {
  flex: none;
  width: 195px;
  border-right: 1px solid #848284;
}

.panel {
  padding: 1px 3px 5px;
  border-top: 1px solid #fff;
  border-bottom: 1px solid #848284;
}

.panel-title {
  display: flex;
  margin-bottom: 1px;
}

.panel-title h2 {
  flex: 1;
  height: 13px;
  padding-left: 3px;
  line-height: 13px;
  background-color: #848284;
  color: #d6d3ce;
}

.panel-title button {
  width: 15px;
  line-height: 0;
}

.panel-title svg,
.strip svg {
  width: 6px;
  height: 6px;
}

.panel-box {
  display: flex;
  height: 153px;
  border-top: 1px solid #848284;
  border-left: 1px solid #848284;
}

.clip {
  flex: 1;
  min-width: 0;
  overflow: hidden;
  background-color: #fff;
}

.scroll {
  flex: none;
  display: flex;
  flex-direction: column;
  width: 16px;
  background: repeating-conic-gradient(#fff 0 25%, #d6d3ce 0 50%) 0 0 / 2px 2px;
}

.scroll button,
.thumb {
  flex: none;
  height: 16px;
  line-height: 0;

  background-color: #d6d3ce;
  border: 1px solid;
  border-color: #fff #404040 #404040 #fff;
}

.scroll svg {
  width: 8px;
  height: 8px;
}

.scroll button:last-child {
  margin-top: auto;
}

.watch-scroll .thumb {
  height: 12px;
  margin-top: 38px;
}

.nav-scroll .thumb {
  margin-top: 45px;
}

.history-scroll .thumb {
  height: 80px;
  margin-top: 80px;
}

table {
  width: 100%;
  table-layout: fixed;
  border-collapse: separate;
  border-spacing: 0;
}

th {
  padding: 0 5px;
  font-weight: normal;
  text-align: right;

  background-color: #d6d3ce;
  border: 1px solid;
  border-color: #fff #848284 #848284 #fff;
}

th:first-child {
  text-align: left;
}

td {
  height: 20px;
  padding: 0 3px;
  text-align: right;
  white-space: nowrap;
  border-right: 1px solid #ceccce;
  border-bottom: 1px solid #ceccce;
}

td:first-child {
  text-align: left;
}

td svg {
  vertical-align: middle;
}

.quotes th {
  height: 18px;
}

.quotes th:first-child {
  width: 73px;
}

.quotes td {
  background-color: #f7fff7;
  color: #f00;
}

.quotes .rise td {
  color: #00f;
}

.quotes tr td:first-child {
  padding-left: 4px;
  color: #000;
}

.quotes svg {
  width: 11px;
  height: 11px;
  margin-right: 4px;
}

.tree {
  list-style: none;
  padding-top: 1px;
}

.tree li {
  display: flex;
  align-items: center;
  height: 18px;
  margin-left: 13px;
  white-space: nowrap;
  border-left: 1px dotted #848284;
}

.tree li::before {
  content: "";
  flex: none;
  align-self: stretch;
  width: 12px;
  margin-left: 20px;
  border-left: 1px dotted #848284;
  background: repeating-linear-gradient(90deg, #848284 0 1px, #fff 1px 2px) 0 9px / 100% 1px no-repeat;
}

.tree svg {
  width: 16px;
  height: 16px;
  margin: 0 4px 0 1px;
}

.mark {
  fill: #ffe060;
  stroke: #a87c10;
}

.mark.gray {
  fill: #a8a8a8;
  stroke: #686868;
}

.tabs {
  display: flex;
  height: 18px;
  padding-left: 4px;
  border-top: 1px solid #000;
  color: #404040;
}

.tabs button {
  padding: 0 8px;
  line-height: 16px;
}

.tabs button::after {
  content: "";
  display: inline-block;
  width: 1px;
  height: 11px;
  margin: 0 -10px 0 9px;
  vertical-align: middle;
  background-color: #404040;
}

.tabs .active {
  margin-top: -1px;
  color: #000;
  background-color: #fff;
  border: solid #000;
  border-width: 0 1px 1px;
}

.tabs .active::after {
  display: none;
}

.chart-area {
  flex: 1;
  display: flex;
  flex-direction: column;
  min-width: 0;
}

.chart {
  position: relative;
  flex: 1;
  min-height: 0;
  margin-right: 1px;
  background-color: #000;
  color: #fff;
  font-size: 9px;
}

#chart {
  display: block;
  width: 100%;
  height: 100%;
}

#chart text {
  fill: #fff;
  font-size: 9px;
}

#chart .price-now {
  fill: #000;
}

.quote-line {
  position: absolute;
  left: 7px;
  top: 4px;
  display: flex;
  align-items: center;
  gap: 3px;
  font-size: 9px;
}

.quote-line .pair {
  margin-right: 8px;
}

.balance {
  position: absolute;
  left: 354px;
  top: 5px;
  font: 13px/15px "Liberation Sans", sans-serif;
}

.expert {
  position: absolute;
  right: 52px;
  top: 6px;
  display: flex;
  align-items: center;
  gap: 2px;
  font-size: 9px;
}

.readout {
  position: absolute;
  left: 4px;
  top: 45px;
  display: grid;
  grid-template-columns: 140px 4px 45px 60px;
  font: 11px/12px "Liberation Sans", sans-serif;
}

.readout span {
  height: 12px;
}

.readout span:nth-child(4n),
.readout span:nth-child(4n + 3) {
  text-align: right;
}

.chart-tabs {
  height: 20px;
  margin-top: 1px;
  margin-bottom: 1px;
}

.chart-tabs button {
  flex: none;
  width: 86px;
  padding: 0;
  line-height: 18px;
}

.chart-tabs button::after {
  float: right;
  margin: 4px 0 0;
}

.tab-scroll {
  display: flex;
  align-items: center;
  gap: 15px;
  margin-left: auto;
  padding-right: 10px;
  fill: #848284;
}

/* terminal */
.terminal {
  flex: none;
  display: flex;
  padding: 3px 3px 4px 0;
  border-top: 1px solid #fff;
  border-bottom: 1px solid #848284;
}

.strip {
  display: flex;
  flex-direction: column;
  width: 15px;
}

.strip button {
  height: 14px;
  line-height: 0;
}

.strip h2 {
  flex: 1;
  margin: 0 1px;
  padding-top: 2px;
  line-height: 13px;
  writing-mode: vertical-rl;
  transform: rotate(180deg);
  background-color: #848284;
  color: #d6d3ce;
}

.terminal-main {
  flex: 1;
  min-width: 0;
  border-top: 1px solid #848284;
  border-left: 1px solid #848284;
}

.history {
  display: flex;
  height: 193px;
}

.orders th {
  height: 18px;
}

.orders tbody tr:nth-child(even) {
  background-color: #efebef;
}

.orders tbody tr.selected {
  background-color: #08246b;
  color: #fff;
}

.orders th:first-child svg {
  margin-left: 10px;
}

.orders tbody svg {
  width: 16px;
  height: 16px;
  margin-right: 3px;
}

.orders .stop {
  background-color: #ffa2a5;
}

.orders .take {
  background-color: #63f363;
}

.orders td:last-child {
  padding-right: 4px;
}

.orders tfoot td {
  font-weight: bold;
  background-color: #cecbce;
  border: none;
}

.orders tfoot span {
  margin-right: 2px;
}

.bullet {
  display: inline-block;
  width: 8px;
  height: 8px;
  margin: 0 6px 0 4px;
  vertical-align: middle;
  border: 1px solid #848284;
  border-radius: 50%;
  background-color: #c0c0c0;
}

.c-order {
  width: 117px;
}

.c-time {
  width: 200px;
}

.c-mid {
  width: 90px;
}

.c-size {
  width: 72px;
}

.terminal-tabs button {
  padding: 0 9px;
}

.terminal-tabs sub {
  color: #f00;
  font-size: 8px;
  font-weight: bold;
  line-height: 0;
}

/* status */
.status {
  flex: none;
  display: flex;
  align-items: center;
  height: 25px;
  padding-top: 3px;
  border-top: 1px solid #fff;
}

.status span {
  display: flex;
  align-items: center;
  gap: 2px;
  height: 18px;
  padding-left: 4px;
  white-space: nowrap;
  border-left: 1px solid #848284;
}

.status .help {
  flex: 1;
  padding-left: 1px;
  border: none;
}

.status .s-profile {
  width: 109px;
}

.status .s-time {
  width: 101px;
}

.status .s-val {
  width: 71px;
}

.status .s-vol {
  width: 66px;
}

.status .s-net {
  width: 121px;
}

/* taskbar */
.taskbar {
  flex: none;
  display: flex;
  height: 43px;
  padding: 2px;
  gap: 3px;
  border-top: 1px solid #fff;
}

.start,
.framed {
  border: 1px solid;
  border-color: #fff #404040 #404040 #fff;
  box-shadow: inset -1px -1px 0 #848284;
}

.start {
  display: flex;
  align-items: center;
  gap: 1px;
  width: 52px;
  height: 38px;
  margin-right: 7px;
  padding-left: 1px;
  font-weight: bold;
}

.task {
  display: flex;
  align-items: center;
  justify-content: center;
  width: 47px;
  height: 38px;
}

.task.current {
  background-color: #fff;
  border-color: #404040 #fff #fff #404040;
  box-shadow: none;
}

.logo-text {
  font-size: 7px;
}

.tray {
  display: flex;
  align-items: center;
  gap: 6px;
  width: 156px;
  height: 38px;
  margin-left: auto;
  padding-left: 5px;
  border: 1px solid;
  border-color: #848284 #fff #fff #848284;
}

.tray p {
  width: 56px;
  line-height: 16px;
  text-align: center;
}
```
FILE: chart.js
```
(() => {
  const svg = document.getElementById("chart");
  const NS = "http://www.w3.org/2000/svg";

  // high, body top, body bottom, low, 1 = falling
  const candles = [
    [120, 125, 136, 136, 0], [104, 122, 126, 127, 0], [119, 122, 149, 149, 1], [132, 136, 149, 160, 0],
    [132, 136, 163, 163, 1], [151, 165, 172, 176, 1], [155, 160, 171, 179, 0], [122, 127, 160, 160, 0],
    [97, 111, 128, 130, 0], [86, 107, 113, 121, 0], [58, 63, 98, 98, 0], [49, 63, 110, 112, 1],
    [64, 79, 100, 122, 0], [76, 79, 90, 129, 1], [27, 30, 89, 90, 0], [23, 28, 76, 84, 1],
    [56, 76, 77, 104, 0], [42, 62, 81, 97, 0], [57, 62, 83, 113, 1], [80, 82, 109, 109, 1],
    [89, 107, 115, 124, 1], [113, 115, 138, 142, 1], [122, 138, 152, 163, 1], [149, 151, 153, 165, 1],
    [138, 139, 154, 175, 0], [123, 124, 140, 153, 0], [103, 112, 124, 128, 0], [102, 112, 116, 133, 1],
    [106, 109, 117, 133, 1], [105, 116, 137, 137, 1], [121, 129, 137, 137, 0], [127, 129, 135, 135, 1],
    [130, 134, 138, 142, 1], [136, 136, 144, 149, 1], [143, 144, 152, 168, 1], [132, 136, 152, 160, 0],
    [129, 136, 156, 156, 1], [142, 150, 156, 158, 0], [143, 149, 161, 165, 1], [150, 150, 161, 163, 0],
    [146, 150, 162, 162, 1], [155, 161, 165, 167, 1], [162, 164, 180, 182, 1], [178, 179, 198, 201, 1],
    [164, 169, 198, 199, 0], [160, 162, 170, 177, 0], [139, 143, 164, 170, 0], [138, 143, 175, 175, 1],
    [169, 174, 182, 191, 1], [172, 181, 186, 189, 1], [164, 164, 186, 196, 0], [164, 164, 186, 197, 1],
    [159, 159, 186, 189, 0], [156, 159, 172, 174, 1], [160, 171, 176, 181, 1], [168, 176, 179, 189, 1],
    [173, 178, 193, 198, 1], [147, 189, 193, 194, 0], [185, 190, 239, 258, 1], [167, 178, 239, 244, 0],
    [176, 178, 215, 223, 1], [182, 209, 216, 224, 0], [185, 191, 209, 229, 0], [124, 136, 191, 195, 0],
    [86, 108, 137, 139, 0], [87, 93, 109, 109, 0], [90, 94, 118, 129, 1], [89, 91, 118, 128, 0],
    [86, 91, 101, 120, 1], [75, 82, 102, 108, 0], [81, 83, 127, 142, 1], [116, 126, 131, 144, 1],
    [120, 125, 130, 134, 0], [74, 75, 126, 126, 0], [74, 75, 90, 101, 1], [78, 89, 122, 122, 1],
    [94, 114, 126, 126, 0], [104, 112, 115, 121, 0], [110, 112, 116, 121, 1], [104, 110, 115, 116, 0],
    [95, 99, 111, 111, 0], [98, 100, 103, 113, 1], [79, 80, 103, 107, 0], [64, 80, 108, 109, 1],
    [91, 94, 108, 122, 0], [82, 88, 94, 96, 0], [77, 84, 89, 93, 0], [84, 84, 99, 99, 1],
    [94, 98, 103, 110, 1], [98, 101, 103, 109, 0], [98, 101, 109, 117, 1], [99, 101, 109, 110, 0],
    [99, 101, 113, 113, 1], [106, 110, 113, 118, 0], [78, 94, 112, 113, 0], [90, 93, 99, 106, 1],
    [91, 96, 99, 114, 0], [94, 96, 111, 114, 1], [101, 110, 146, 146, 1], [142, 145, 146, 157, 0],
    [131, 139, 146, 146, 0], [131, 138, 160, 165, 1], [155, 159, 161, 171, 0], [135, 160, 180, 180, 1],
    [166, 168, 179, 181, 0], [158, 164, 169, 179, 0], [126, 143, 165, 179, 0], [142, 143, 151, 173, 1],
    [122, 150, 159, 165, 1], [158, 159, 200, 204, 1], [178, 199, 201, 237, 0], [200, 201, 248, 258, 1],
    [245, 248, 290, 332, 1], [144, 176, 290, 294, 0], [126, 155, 178, 188, 0], [122, 135, 156, 168, 0],
    [132, 135, 161, 161, 1]
  ];

  const prices = ["1.32850", "1.32770", "1.32685", "1.32605", "1.32520", "1.32440", "1.32360", "1.32275", "1.32195", "1.32115"];
  const times = ["25 Sep 2019", "25 Sep 14:00", "25 Sep 18:00", "25 Sep 22:00", "26 Sep 02:00", "26 Sep 06:00", "26 Sep 10:00", "26 Sep 14:00", "26 Sep 18:00", "26 Sep 22:00", "27 Sep 02:00", "27 Sep 06:00", "27 Sep 10:00", "27 Sep 14:00", "27 Sep 18:00"];
  const PRICE_NOW = "1.32552";

  const priceY = (price) => Math.round(37 + (1.3285 - price) * 41300);

  const add = (name, attrs, text) => {
    const el = document.createElementNS(NS, name);
    Object.entries(attrs).forEach(([key, value]) => el.setAttribute(key, value));
    if (text) el.textContent = text;
    svg.appendChild(el);
  };
  const rect = (x, y, width, height, fill) => add("rect", { x, y, width, height, fill, "shape-rendering": "crispEdges" });

  const draw = () => {
    svg.textContent = "";
    const right = svg.clientWidth - 47;
    const bottom = svg.clientHeight - 21;
    const nowY = priceY(PRICE_NOW);

    rect(3, nowY, right - 3, 1, "#778899");

    candles.forEach(([high, top, end, low, falling], i) => {
      const x = 4 + i * 8;
      rect(x, high, 1, low - high, "#00ff00");
      // the first bar is cut by the left frame
      const left = Math.max(x - 2, 4);
      rect(left, top, x + 3 - left, Math.max(end - top, 1), "#00ff00");
      if (end - top > 2) rect(x - 1, top + 1, 3, end - top - 2, falling ? "#fff" : "#000");
    });

    // frame
    rect(3, 4, right - 2, 1, "#fff");
    rect(3, 4, 1, bottom - 4, "#fff");
    rect(right, 4, 1, bottom - 3, "#fff");
    rect(3, bottom, right - 2, 1, "#fff");

    prices.forEach((price) => {
      const y = priceY(price);
      rect(right, y, 3, 1, "#fff");
      add("text", { x: right + 6, y: y + 4 }, price);
    });
    rect(right + 3, nowY - 5, 39, 11, "#fff");
    add("text", { x: right + 6, y: nowY + 4, class: "price-now" }, PRICE_NOW);

    times.forEach((time, i) => {
      rect(4 + i * 64, bottom, 1, 4, "#fff");
      add("text", { x: 2 + i * 64, y: bottom + 13 }, time);
    });

    // shift marker, corner marker, open trade
    add("path", { d: "M891 4h10l-5 6z", fill: "#778899" });
    add("path", { d: `M4 ${bottom - 5}l5 5h-5z`, fill: "#778899" });
    rect(897, 217, 7, 1, "#0000ff");
    add("path", { d: "M894 297h3v-2l4 4-4 4v-2h-3z", fill: "#00ff00", stroke: "#fff" });
  };

  draw();
  window.addEventListener("resize", draw);
})();
```
